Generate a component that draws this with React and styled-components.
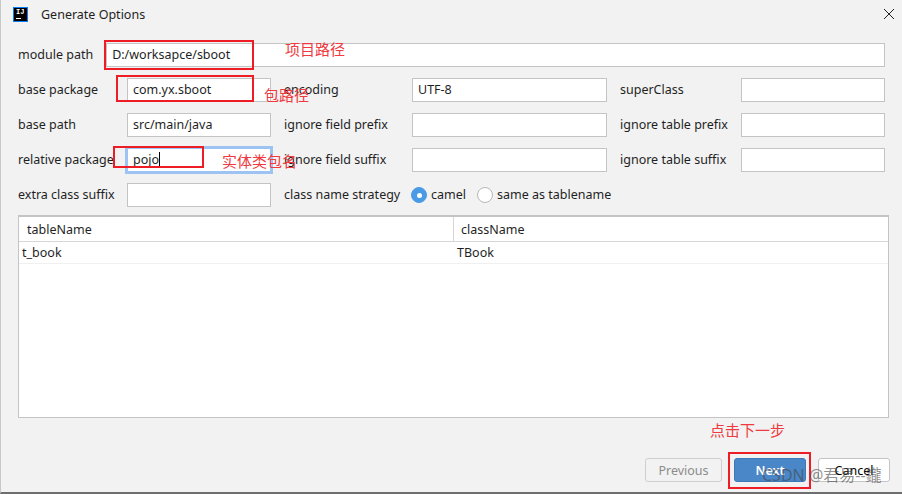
import React from "react";
import styled, { createGlobalStyle } from "styled-components";

const Global = createGlobalStyle`
  html, body { margin: 0; padding: 0; background: #f2f2f2; }
  body { font-family: "Noto Sans", "Noto Sans CJK SC", sans-serif; font-size: 12.5px; color: #1f1f1f; }
`;

const Dialog = styled.div`
  position: relative;
  width: 902px;
  height: 494px;
  box-sizing: border-box;
  overflow: hidden;
  background: #f2f2f2;
  border-left: 1px solid #c8c8c8;
  border-bottom: 2px solid #6e6e6e;
  display: flex;
  flex-direction: column;
`;

const TitleBar = styled.div`
  height: 28px;
  margin-bottom: 15px;
  padding: 0 7px 0 12px;
  display: flex;
  align-items: center;
  gap: 13px;
  flex: none;
`;

const Logo = styled.div`
  width: 15px;
  height: 15px;
  background: #000;
  border: 1px solid #087cfa;
  box-sizing: border-box;
  color: #fff;
  font: 700 7px/9px "Liberation Mono", monospace;
  padding-left: 2px;
  position: relative;
  &::after {
    content: "";
    position: absolute;
    left: 2px;
    bottom: 2px;
    width: 5px;
    height: 1px;
    background: #fff;
  }
`;

const Title = styled.div`
  flex: 1;
  font-size: 12.5px;
`;

const Form = styled.div`
  display: grid;
  grid-template-columns: 109px 144px 141px 195px 134px 144px;
  grid-auto-rows: 24px;
  row-gap: 11px;
  padding-left: 17px;
  align-items: center;
`;

const WideRow = styled.div`
  grid-column: 1 / -1;
  display: flex;
  align-items: center;
  gap: 13px;
`;

const Label = styled.div`
  padding-left: ${(p) => (p.$indent ? "13px" : "0")};
  white-space: nowrap;
  position: relative;
  top: -1px;
`;

const Field = styled.div`
  box-sizing: border-box;
  height: 24px;
  width: 100%;
  min-width: 0;
  flex: 1;
  background: #fff;
  border: 1px solid #c4c4c4;
  padding: 0 5px 2px;
  display: flex;
  align-items: center;
  white-space: nowrap;
  ${(p) => p.$focus && "outline: 2px solid #9cc3f2; outline-offset: 0; border-color: #9cc3f2;"}
`;

const Caret = styled.span`
  display: inline-block;
  width: 1px;
  height: 15px;
  background: #000;
`;

const RadioCell = styled.div`
  grid-column: 4 / 7;
  display: flex;
  align-items: center;
  margin-left: -1px;
`;

const Radio = styled.span`
  box-sizing: border-box;
  width: 16px;
  height: 16px;
  border-radius: 50%;
  flex: none;
  margin-right: 4px;
  display: flex;
  align-items: center;
  justify-content: center;
  background: ${(p) => (p.$on ? "#4a9ae6" : "#fff")};
  border: 1px solid ${(p) => (p.$on ? "#4a9ae6" : "#b8b8b8")};
  &::after {
    content: "";
    width: 5px;
    height: 5px;
    border-radius: 50%;
    background: ${(p) => (p.$on ? "#fff" : "transparent")};
  }
`;

const RadioText = styled.span`
  margin-right: 11px;
  white-space: nowrap;
  position: relative;
  top: -1px;
`;

const Table = styled.div`
  box-sizing: border-box;
  margin: 8px 13px 0 17px;
  height: 203px;
  flex: none;
  background: #fff;
  border: 1px solid #c4c4c4;
  border-top-width: 2px;
`;

const HeadRow = styled.div`
  display: grid;
  grid-template-columns: 435px 1fr;
  height: 25px;
  border-bottom: 1px solid #d6d6d6;
  box-sizing: border-box;
  align-items: center;
`;

const HeadCell = styled.div`
  height: 100%;
  display: flex;
  align-items: center;
  padding-left: ${(p) => (p.$first ? "8px" : "7px")};
  box-sizing: border-box;
  border-right: ${(p) => (p.$first ? "1px solid #d6d6d6" : "none")};
`;

const BodyRow = styled.div`
  display: grid;
  grid-template-columns: 435px 1fr;
  height: 22px;
  border-bottom: 1px solid #f0f0f0;
  align-items: center;
  box-sizing: border-box;
`;

const BodyCell = styled.div`
  padding-left: 3px;
`;

const Footer = styled.div`
  display: flex;
  justify-content: flex-end;
  gap: 12px;
  padding: 40px 12px 0 0;
`;

const Button = styled.div`
  box-sizing: border-box;
  width: ${(p) => p.$w}px;
  height: 24px;
  border-radius: 3px;
  display: flex;
  align-items: center;
  justify-content: center;
  ${(p) =>
    p.$primary
      ? "background: #4a87c9; border: 1px solid #3f78b6; color: #fff; font-weight: 600;"
      : p.$disabled
      ? "background: #f2f2f2; border: 1px solid #cfcfcf; color: #8c8c8c;"
      : "background: #fff; border: 1px solid #c4c4c4; color: #000;"}
`;

const Box = styled.div`
  position: absolute;
  box-sizing: border-box;
  border: 2px solid #ee1c25;
  left: ${(p) => p.$x}px;
  top: ${(p) => p.$y}px;
  width: ${(p) => p.$w}px;
  height: ${(p) => p.$h}px;
  pointer-events: none;
`;

const Note = styled.div`
  position: absolute;
  left: ${(p) => p.$x}px;
  top: ${(p) => p.$y}px;
  color: #ee3a40;
  font: 15px/18px "Noto Sans CJK SC", sans-serif;
  white-space: nowrap;
`;

const Watermark = styled.div`
  position: absolute;
  left: 761px;
  top: 465px;
  color: rgba(70, 70, 70, 0.6);
  font: 16px/20px "Noto Sans", "Noto Sans CJK SC", sans-serif;
  white-space: nowrap;
`;

export default function App() {
  return (
    <>
      <Global />
      <Dialog>
        <TitleBar>
          <Logo>IJ</Logo>
          <Title>Generate Options</Title>
          <svg width="12" height="12" viewBox="0 0 12 12">
            <path d="M1 1L11 11M11 1L1 11" stroke="#222" strokeWidth="1" fill="none" />
          </svg>
        </TitleBar>
        <Form>
          <WideRow>
            <Label>module path</Label>
            <Field>D:/worksapce/sboot</Field>
          </WideRow>

          <Label>base package</Label>
          <Field>com.yx.sboot</Field>
          <Label $indent>encoding</Label>
          <Field>UTF-8</Field>
          <Label $indent>superClass</Label>
          <Field />

          <Label>base path</Label>
          <Field>src/main/java</Field>
          <Label $indent>ignore field prefix</Label>
          <Field />
          <Label $indent>ignore table prefix</Label>
          <Field />

          <Label>relative package</Label>
          <Field $focus>
            pojo
            <Caret />
          </Field>
          <Label $indent>ignore field suffix</Label>
          <Field />
          <Label $indent>ignore table suffix</Label>
          <Field />

          <Label>extra class suffix</Label>
          <Field />
          <Label $indent>class name strategy</Label>
          <RadioCell>
            <Radio $on />
            <RadioText>camel</RadioText>
            <Radio />
            <RadioText>same as tablename</RadioText>
          </RadioCell>
        </Form>
        <Table>
          <HeadRow>
            <HeadCell $first>tableName</HeadCell>
            <HeadCell>className</HeadCell>
          </HeadRow>
          <BodyRow>
            <BodyCell>t_book</BodyCell>
            <BodyCell>TBook</BodyCell>
          </BodyRow>
        </Table>
        <Footer>
          <Button $w={77} $disabled>Previous</Button>
          <Button $w={72} $primary>Next</Button>
          <Button $w={72}>Cancel</Button>
        </Footer>

        <Box $x={103} $y={40} $w={150} $h={30} />
        <Box $x={115} $y={75} $w={138} $h={27} />
        <Box $x={112} $y={146} $w={91} $h={22} />
        <Box $x={727} $y={452} $w={83} $h={37} />
        <Note $x={284} $y={40}>项目路径</Note>
        <Note $x={263} $y={86}>包路径</Note>
        <Note $x={221} $y={152}>实体类包名</Note>
        <Note $x={709} $y={421}>点击下一步</Note>
        <Watermark>CSDN @君易--鑨</Watermark>
      </Dialog>
    </>
  );
}
